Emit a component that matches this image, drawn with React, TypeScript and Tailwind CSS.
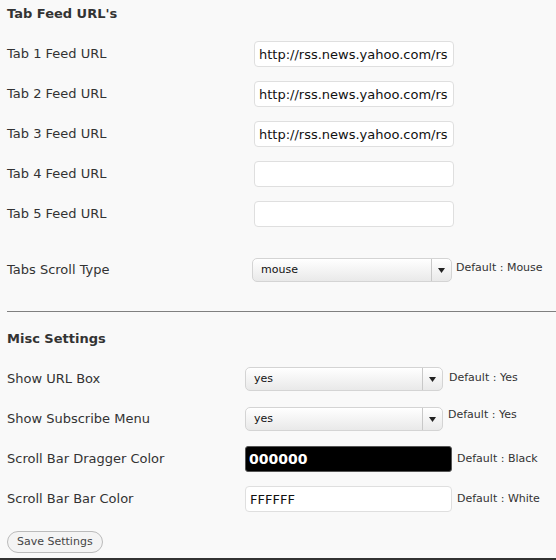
import React from 'react';

const font = { fontFamily: '"DejaVu Sans", "Liberation Sans", sans-serif' };

const feeds = [
  { label: 'Tab 1 Feed URL', value: 'http://rss.news.yahoo.com/rs' },
  { label: 'Tab 2 Feed URL', value: 'http://rss.news.yahoo.com/rs' },
  { label: 'Tab 3 Feed URL', value: 'http://rss.news.yahoo.com/rs' },
  { label: 'Tab 4 Feed URL', value: '' },
  { label: 'Tab 5 Feed URL', value: '' },
];

const Select: React.FC<{ value: string; className?: string }> = ({ value, className }) => (
  <div
    className={`flex h-[24px] items-stretch rounded-[5px] border border-[#d4d4d4] bg-gradient-to-b from-[#ffffff] via-[#f4f4f4] to-[#e9e9e9] shadow-[inset_0_1px_0_#fff] ${className ?? ''}`}
  >
    <span className="flex flex-1 items-center pl-[8px] text-[11px] text-[#111]">{value}</span>
    <span className="flex w-[20px] items-center justify-center border-l border-[#c8c8c8]">
      <svg width="7" height="5" viewBox="0 0 7 5">
        <path d="M0 0h7L3.5 5z" fill="#222" />
      </svg>
    </span>
  </div>
);

const Hint: React.FC<{ text: string; className?: string }> = ({ text, className }) => (
  <span className={`text-[11px] text-[#333] ${className ?? ''}`}>{text}</span>
);

export default function App() {
  return (
    <div className="flex h-[560px] w-[556px] flex-col bg-[#f9f9f9] pt-[1px] text-[#333]" style={font}>
      {/* Tab Feed URL's */}
      <h3 className="flex h-[26px] items-center pl-[7px] text-[13px] font-bold">Tab Feed URL's</h3>
      <div className="mt-[7px] flex flex-col">
        {feeds.map((f) => (
          <div key={f.label} className="flex h-[40px] items-center">
            <label className="w-[254px] pl-[7px] text-[13px]">{f.label}</label>
            <input
              readOnly
              value={f.value}
              className="h-[26px] w-[200px] rounded-[4px] border border-[#dfdfdf] bg-white px-[4px] text-[13px] text-[#111] outline-none"
            />
          </div>
        ))}
      </div>
      <div className="mt-[16px] flex h-[40px] items-center">
        <label className="w-[252px] pl-[7px] text-[13px]">Tabs Scroll Type</label>
        <Select value="mouse" className="w-[200px]" />
        <Hint text="Default : Mouse" className="mb-[3px] ml-[4px]" />
      </div>

      <div className="ml-[7px] mt-[21px] h-px bg-[#808080]" />

      {/* Misc Settings */}
      <h3 className="h-[47px] pl-[7px] pt-[19px] text-[13px] font-bold leading-[16px]">Misc Settings</h3>
      <div className="flex flex-col">
        <div className="flex h-[40px] items-center">
          <label className="w-[245px] pl-[7px] text-[13px]">Show URL Box</label>
          <Select value="yes" className="w-[198px]" />
          <Hint text="Default : Yes" className="mb-[2px] ml-[6px]" />
        </div>
        <div className="flex h-[40px] items-center">
          <label className="w-[245px] pl-[7px] text-[13px]">Show Subscribe Menu</label>
          <Select value="yes" className="w-[198px]" />
          <Hint text="Default : Yes" className="mb-[8px] ml-[5px]" />
        </div>
        <div className="flex h-[40px] items-center">
          <label className="w-[245px] pl-[7px] text-[13px]">Scroll Bar Dragger Color</label>
          <input
            readOnly
            value="000000"
            className="h-[26px] w-[207px] rounded-[3px] border border-[#555] bg-black px-[3px] text-[14px] font-bold text-white outline-none"
          />
          <Hint text="Default : Black" className="ml-[5px]" />
        </div>
        <div className="flex h-[40px] items-center">
          <label className="w-[245px] pl-[7px] text-[13px]">Scroll Bar Bar Color</label>
          <input
            readOnly
            value="FFFFFF"
            className="h-[26px] w-[207px] rounded-[4px] border border-[#dfdfdf] bg-white px-[4px] text-[13px] text-[#111] outline-none"
          />
          <Hint text="Default : White" className="ml-[5px]" />
        </div>
      </div>

      <div className="mt-[12px] flex pl-[7px]">
        <button className="flex h-[22px] items-center rounded-full border border-[#bbb] bg-[#f4f4f4] px-[9px] text-[11px] text-[#444]">
          Save Settings
        </button>
      </div>
      <div className="mt-auto h-[2px] bg-[#333]" />
    </div>
  );
}
